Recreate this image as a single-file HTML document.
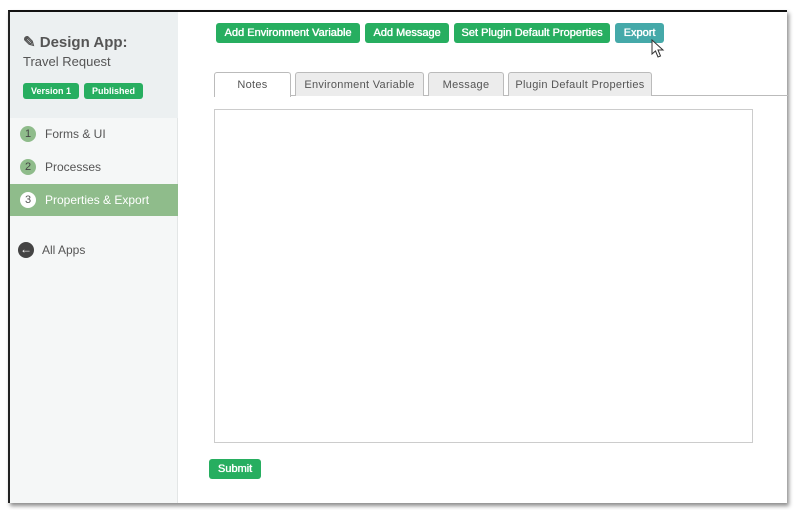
<!DOCTYPE html>
<html><head><style>
*{box-sizing:border-box;margin:0;padding:0}
body{width:794px;height:510px;background:#fff;font-family:"Liberation Sans",sans-serif;position:relative;overflow:hidden}
.win{position:absolute;left:8px;top:10px;width:779px;height:493px;border-left:2px solid #222;border-top:2px solid #111;background:#fff;box-shadow:2px 3px 4px rgba(0,0,0,.45)}
.side{position:absolute;left:0;top:0;width:168px;height:100%;background:#f5f7f7;border-right:1px solid #e3e6e6}
.hd{position:absolute;left:0;top:0;width:168px;height:106px;background:#ecf0f1}
.t1{position:absolute;left:13px;top:21px;font-weight:bold;font-size:15px;color:#555}
.t2{position:absolute;left:13px;top:42px;font-size:13px;color:#555}
.badge{position:absolute;top:71px;height:16px;background:#27ae60;color:#fff;font-size:9px;font-weight:bold;border-radius:3px;text-align:center;line-height:16px}
.it{position:absolute;left:0;width:168px;height:32px;font-size:12px;color:#555;line-height:32px;padding-left:35px}
.num{position:absolute;left:10px;top:8px;width:16px;height:16px;border-radius:50%;background:#8fbc8b;color:#444;font-size:11px;line-height:16px;text-align:center}
.act{background:#8fbc8b;color:#fff}
.act .num{background:#fff;color:#555}
.btn{position:absolute;top:11px;height:20px;background:#27ae60;color:#fff;font-size:11px;border-radius:3px;text-align:center;line-height:20px;text-shadow:0 0 0.6px #fff,0.3px 0 0 #fff}
.tab{position:absolute;top:60px;height:24px;background:#ececec;border:1px solid #bbb;border-bottom:none;border-radius:3px 3px 0 0;font-size:11px;color:#555;text-align:center;line-height:24px;letter-spacing:0.3px}
</style></head><body>
<div class="win">
 <div class="side">
  <div class="hd"></div>
  <div class="t1">&#9998; Design App:</div>
  <div class="t2">Travel Request</div>
  <div class="badge" style="left:13px;width:56px">Version 1</div>
  <div class="badge" style="left:74px;width:59px">Published</div>
  <div class="it" style="top:106px"><span class="num">1</span>Forms &amp; UI</div>
  <div class="it" style="top:139px"><span class="num">2</span>Processes</div>
  <div class="it act" style="top:172px"><span class="num">3</span>Properties &amp; Export</div>
  <div class="it" style="top:222px;padding-left:32px"><span class="num" style="background:#444;color:#fff;left:8px;font-size:12px;line-height:15px">&#8592;</span>All Apps</div>
 </div>
 <div class="btn" style="left:206px;width:144px">Add Environment Variable</div>
 <div class="btn" style="left:355px;width:84px">Add Message</div>
 <div class="btn" style="left:444px;width:156px">Set Plugin Default Properties</div>
 <div class="btn" style="left:605px;width:49px;background:#45a9a9">Export</div>
 <svg style="position:absolute;left:641px;top:27px" width="14" height="20" viewBox="0 0 14 20"><path d="M1 1 L1 15 L4.5 12 L7 18 L9.5 17 L7 11 L12 11 Z" fill="#fff" stroke="#333" stroke-width="1"/></svg>
 <div style="position:absolute;left:204px;top:83px;width:575px;border-top:1px solid #bbb"></div>
 <div class="tab" style="left:204px;width:77px;background:#fff;height:25px">Notes</div>
 <div class="tab" style="left:285px;width:129px">Environment Variable</div>
 <div class="tab" style="left:418px;width:76px">Message</div>
 <div class="tab" style="left:498px;width:144px">Plugin Default Properties</div>
 <div style="position:absolute;left:204px;top:97px;width:539px;height:334px;border:1px solid #ccc"></div>
 <div class="btn" style="left:199px;top:447px;width:52px;height:20px">Submit</div>
</div>
</body></html>
